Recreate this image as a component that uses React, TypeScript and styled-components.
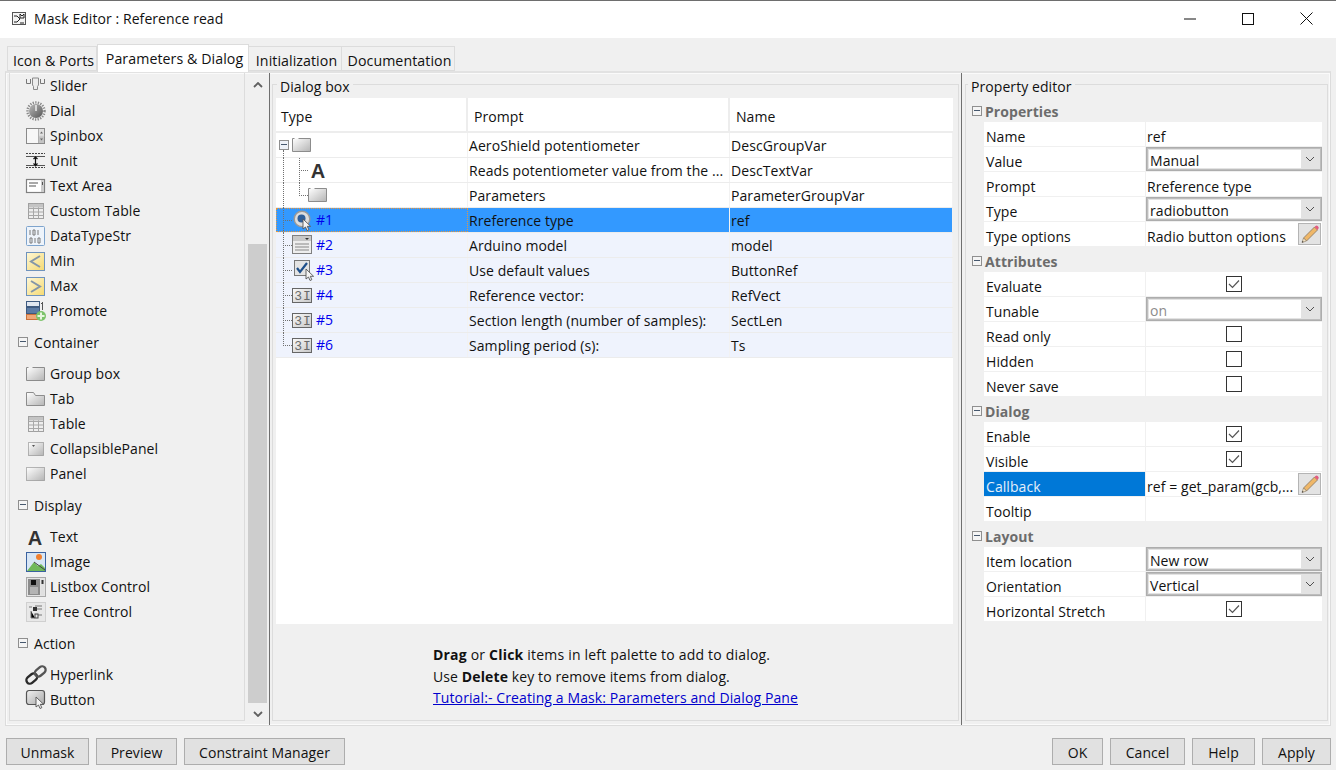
import React from 'react';
import styled, { createGlobalStyle } from 'styled-components';

const Global = createGlobalStyle`
  html, body { margin: 0; padding: 0; background: #f0f0f0; overflow: hidden; }
  * { box-sizing: border-box; }
`;

const Windowed = styled.div`
  width: 1336px; height: 770px; display: flex; flex-direction: column; overflow: hidden;
  background: #f0f0f0; color: #111;
  font-family: "Open Sans", "Noto Sans", sans-serif; font-size: 14px; letter-spacing: .07px;
`;
const TitleBar = styled.header`
  height: 38px; flex: none; background: #fff; border-top: 1px solid #6e6e6e;
  display: flex; align-items: center; padding-left: 12px; padding-bottom: 2px; padding-right: 1px;
`;
const TitleText = styled.span`margin-left: 8px; font-size: 14px; flex: 1; white-space: nowrap;`;
const WinButton = styled.span`width: 58px; height: 30px; display: flex; align-items: center; justify-content: center;`;
const Tabs = styled.nav`height: 33px; flex: none; display: flex; align-items: flex-end; padding-left: 8px; position: relative; z-index: 1;`;
const Tab = styled.div<{ $active?: boolean; $w: number }>`
  width: ${p => p.$w}px; height: ${p => (p.$active ? 28 : 25)}px; margin-bottom: ${p => (p.$active ? -1 : 0)}px;
  background: ${p => (p.$active ? '#fff' : '#f0f0f0')}; font-size: 14.2px;
  border: 1px solid #dcdcdc; border-bottom: ${p => (p.$active ? 'none' : '1px solid #dcdcdc')};
  margin-left: ${p => (p.$active ? 0 : -1)}px;
  display: flex; align-items: center; justify-content: center; white-space: nowrap;
  padding-left: 3px;
  padding-bottom: ${p => (p.$active ? 1 : 0)}px; padding-top: ${p => (p.$active ? 0 : 3)}px;
`;
const Pane = styled.main`
  margin: 0 5px; height: 655px; flex: none; border: 1px solid #dcdcdc; border-top: 2px solid #e2e2e2;
  box-shadow: inset 0 0 0 1px #fafafa;
  display: flex; padding: 0 0 4px 3px;
`;
const PaletteBox = styled.section`
  width: 236px; flex: none; border: 1px solid #dcdcdc; border-top: none; overflow: hidden;
`;
const PaletteRow = styled.div`height: 25px; display: flex; align-items: center; padding-left: 15px; gap: 3px; white-space: nowrap;`;
const IconSlot = styled.span`width: 22px; height: 22px; flex: none; display: flex; align-items: center; justify-content: center;`;
const CategoryRow = styled.div`height: 38px; display: flex; align-items: center; padding-left: 8px; gap: 6px;`;
const Collapse = styled.span`
  width: 10px; height: 10px; flex: none; border: 1px solid #8f8f8f; background: #f4f4f4; position: relative;
  &::after { content: ''; position: absolute; left: 1px; right: 1px; top: 3px; height: 1px; background: #46586e; }
`;
const Scrollbar = styled.div`
  width: 20px; flex: none; margin-left: 3px; margin-bottom: -4px; display: flex; flex-direction: column; align-items: center;
`;
const ScrollArrow = styled.span`height: 24px; flex: none; display: flex; align-items: center; justify-content: center;`;
const ScrollThumb = styled.div`width: 19px; align-self: flex-start; height: 459px; margin-top: 147px; margin-bottom: -1px; background: #cdcdcd; flex: none;`;
const Splitter = styled.div<{ $ml: number }>`width: 1px; flex: none; margin-left: ${p => p.$ml}px; margin-bottom: -4px; background: #6f6f6f;`;
const Group = styled.section<{ $w: number; $ml: number }>`
  width: ${p => p.$w}px; margin-left: ${p => p.$ml}px; margin-top: 11px; flex: none; position: relative;
  border: 1px solid #dcdcdc; padding-top: 13px;
`;
const Legend = styled.span<{ $x: number }>`
  position: absolute; left: ${p => p.$x}px; top: -8px; line-height: 20px; padding: 0 3px; background: #f0f0f0;
`;
const DialogInner = styled.div`margin-left: 3px; width: 677px;`;
const TreeTable = styled.div`height: 526px; background: #fff;`;
const Row = styled.div<{ $bg?: string }>`
  height: 25px; display: grid; grid-template-columns: 192px 262px 223px; background: ${p => p.$bg || '#fff'};
  border-bottom: 1px solid #ececec;
`;
const HeadRow = styled.div`
  height: 35px; display: grid; grid-template-columns: 192px 262px 223px; border-bottom: 2px solid #ededed;
`;
const HeadCell = styled.div`
  display: flex; align-items: center; padding-left: 6px; border-right: 2px solid #ededed; padding-top: 3px;
  &:first-child { padding-left: 5px; }
  &:last-child { border-right: none; }
`;
const TypeCell = styled.div<{ $sel?: boolean }>`
  position: relative; display: flex; align-items: center; color: #0000ee; font-size: 14px;
  border-right: 1px solid ${p => (p.$sel ? 'transparent' : '#f2f2f2')};
  outline: ${p => (p.$sel ? '1px dotted #e8963c' : 'none')}; outline-offset: -1px;
`;
const TextCell = styled.div`display: flex; align-items: center; padding-left: 1px; white-space: nowrap; overflow: hidden; border-right: 1px solid #f2f2f2;`;
const RowIcon = styled.span<{ $x: number }>`position: absolute; left: ${p => p.$x}px; top: 1px; width: 22px; height: 22px; display: flex; align-items: center; justify-content: center;`;
const RowNum = styled.span`position: absolute; left: 40px; top: 2px; line-height: 20px;`;
const VGuide = styled.i<{ $x: number; $top: number; $h: number }>`
  position: absolute; left: ${p => p.$x}px; top: ${p => p.$top}px; height: ${p => p.$h}px; border-left: 1px dotted #707070;
`;
const HGuide = styled.i<{ $x: number; $w: number }>`
  position: absolute; left: ${p => p.$x}px; top: 12px; width: ${p => p.$w}px; border-top: 1px dotted #707070;
`;
const RowToggle = styled(Collapse)`position: absolute; left: 3px; top: 7px; background: #eef2f8;`;
const Help = styled.div`margin: 20px 0 0 157px; line-height: 21.5px; white-space: nowrap; letter-spacing: .11px;`;
const HelpFirst = styled.div`letter-spacing: .2px;`;
const HelpLink = styled.span`color: #0000cc; text-decoration: underline;`;
const PropBox = styled.div`margin-left: 6px; margin-top: -1px; width: 350px;`;
const SectionHead = styled.div`height: 25px; display: flex; align-items: center; gap: 3px; font-weight: 700; color: #6c6c6c; padding-top: 3px;`;
const PropRow = styled.div`
  height: 25px; margin-left: 12px; display: grid; grid-template-columns: 161px 176px; gap: 1px; border-bottom: 1px solid #f0f0f0; background: #f0f0f0;
`;
const PropLabel = styled.div<{ $sel?: boolean }>`
  background: ${p => (p.$sel ? '#0078d7' : '#fff')}; color: ${p => (p.$sel ? '#e4effa' : '#111')}; display: flex; align-items: center; padding: 4px 0 0 2px; white-space: nowrap;
`;
const PropValue = styled.div<{ $center?: boolean }>`
  background: #fff; display: flex; align-items: center; white-space: nowrap; overflow: hidden;
  justify-content: ${p => (p.$center ? 'center' : 'flex-start')};
`;
const PropText = styled.span`padding: 4px 0 0 1px; flex: 1; overflow: hidden;`;
const Select = styled.div<{ $dim?: boolean }>`
  width: 176px; height: 24px; border: 1px solid #adadad; box-shadow: inset 0 0 0 1px #bdbdbd; display: flex; background: #e3e3e3; padding: 2px;
  color: ${p => (p.$dim ? '#8c8c8c' : '#111')};
`;
const SelectField = styled.span`flex: 1; background: #fff; padding: 0 0 0 1px;`;
const SelectValue = styled.span`display: block; line-height: 22px;`;
const SelectArrow = styled.span`width: 18px; display: flex; align-items: center; justify-content: center;`;
const Checkbox = styled.span`width: 16px; height: 16px; border: 1px solid #333; background: #fff; display: flex; align-items: center; justify-content: center;`;
const PencilButton = styled.span`
  width: 23px; height: 22px; flex: none; margin-right: 1px; background: #e3e3e3; border: 1px solid #b4b4b4; display: flex; align-items: center; justify-content: center;
`;
const Footer = styled.footer`flex: 1; display: flex; gap: 7px; padding: 12px 5px 5px 6px;`;
const FootButton = styled.div<{ $w: number; $push?: boolean }>`
  width: ${p => p.$w}px; height: 27px; background: #e1e1e1; border: 1px solid #adadad; display: flex; align-items: center; justify-content: center;
  padding-top: 1px; margin-left: ${p => (p.$push ? 'auto' : 0)};
`;

const Grad = ({ id, a = '#fff', b = '#b4b4b4' }: { id: string; a?: string; b?: string }) => (
  <defs><linearGradient id={id} x1="0" y1="0" x2="1" y2="1"><stop offset="0" stopColor={a} /><stop offset="1" stopColor={b} /></linearGradient></defs>
);
const Cursor = ({ x, y }: { x: number; y: number }) => (
  <path transform={`translate(${x} ${y})`} d="M0 0v10l2.500-2 1.500 3.500 1.800-.8-1.500-3.400h3.300z" fill="#f4f4f4" stroke="#555" strokeWidth=".9" />
);

const GroupGlyph = ({ id }: { id: string }) => (
  <g>
    <Grad id={id} />
    <rect x=".5" y="3.500" width="18" height="13" fill={`url(#${id})`} />
    <path d="M2.500 3.500H.5v13h18v-13H6.500" fill="none" stroke="#8c8c8c" />
  </g>
);

const glyphs: Record<string, React.ReactNode> = {
  slider: <g fill="none" stroke="#777"><path d="M.5 3v4.500h4V3M14.500 3v4.500h4V3" /><path d="M6.500 2h6v7l-1 1.500v3h-4v-3l-1-1.500z" fill="#ececec" stroke="#8a8a8a" /></g>,
  dial: <g><Grad id="d1" a="#bbb" b="#555" /><circle cx="10" cy="10" r="8.500" fill="none" stroke="#8a8a8a" strokeDasharray="1.300 1.300" strokeWidth="2.500" /><circle cx="10" cy="10" r="7" fill="url(#d1)" /><path d="M10 4v6" stroke="#eee" strokeWidth="1.500" /></g>,
  spin: <g><rect x=".5" y="2.500" width="18" height="15" fill="#f7f7f7" stroke="#8a8a8a" /><path d="M12.500 3v14M12.500 10h6" stroke="#b0b0b0" /><rect x="13" y="3" width="5" height="6.500" fill="#e0e0e0" /><rect x="13" y="10.500" width="5" height="6.500" fill="#c4c4c4" /><path d="M14 7.500l1.500-2 1.500 2zM14 12.500l1.500 2 1.500-2z" fill="#666" /></g>,
  unit: <g stroke="#444" fill="none"><path d="M0 2.500h19M0 16.500h19" strokeDasharray="2 1" /><path d="M0 5.500h19M0 14.500h19" stroke="#555" /><path d="M9.500 5.500v10M7.500 8l2-2 2 2M7.500 12.500l2 2 2-2" stroke="#111" strokeWidth="1.200" /></g>,
  textarea: <g><rect x=".5" y="3.500" width="18" height="13" fill="#fff" stroke="#808080" strokeWidth="1.200" /><path d="M3 7h9M3 10h7" stroke="#555" strokeWidth="1.200" /><rect x="15" y="4" width="3" height="12" fill="#ccc" /><rect x="16" y="6" width="1" height="3" fill="#555" /></g>,
  table: <g><rect x="2.500" y="2.500" width="15" height="15" fill="#eee" stroke="#a0a0a0" /><path d="M2.500 7.500h15M2.500 11h15M2.500 14.500h15M7.500 2.500v15M12.500 2.500v15" stroke="#a8a8a8" /><rect x="3" y="3" width="14" height="3.500" fill="#c4c4c4" /></g>,
  datatype: <g><rect x=".5" y=".5" width="18" height="19" rx="1" fill="#eef4fb" stroke="#7ea4cd" /><path d="M4 4v5M7 4h2v5H7zM12 4v5M4 12h2v5H4zM9 12v5M12 12h2v5h-2z" stroke="#7a7a7a" fill="none" /></g>,
  min: <g><Grad id="y1" a="#fff8d8" b="#f5d970" /><rect x=".5" y="1.500" width="18" height="18" fill="url(#y1)" stroke="#6f93bd" /><path d="M14 5l-9 5.500 9 5.500" fill="none" stroke="#8496a8" strokeWidth="2" /></g>,
  max: <g><Grad id="y2" a="#fff8d8" b="#f5d970" /><rect x=".5" y="1.500" width="18" height="18" fill="url(#y2)" stroke="#6f93bd" /><path d="M5 5l9 5.500-9 5.500" fill="none" stroke="#8496a8" strokeWidth="2" /></g>,
  promote: <g><rect x=".5" y=".5" width="13" height="5" fill="#dfe6f0" stroke="#3e5a80" /><rect x=".5" y="6.500" width="13" height="6" fill="#5b7ba5" stroke="#3e5a80" /><rect x=".5" y="13.500" width="13" height="5" fill="#f0a878" stroke="#c8703a" /><path d="M16.500 1v8M15 2.500h2" stroke="#555" fill="none" /><circle cx="15" cy="15" r="5" fill="#7cc36a" /><path d="M15 11.500v7M11.500 15h7" stroke="#e8f6e0" strokeWidth="2" /></g>,
  groupbox: <GroupGlyph id="g1" />,
  tab: <g><Grad id="g2" /><path d="M.5 16.500v-13h7l2 3h9v10z" fill="url(#g2)" stroke="#8c8c8c" /></g>,
  collapsible: <g><Grad id="g3" /><rect x="2.500" y="3.500" width="15" height="13" fill="url(#g3)" stroke="#777" strokeDasharray="1 1" /><path d="M6 6h3l-1.500 2z" fill="#555" /></g>,
  panel: <g><Grad id="g4" /><rect x=".5" y="3.500" width="18" height="13" fill="url(#g4)" stroke="#777" strokeDasharray="1 1" /></g>,
  image: <g><rect x=".5" y=".5" width="19" height="19" fill="#d8e6f5" stroke="#3a62a0" /><circle cx="13" cy="5" r="3" fill="#f08030" /><path d="M1 19l7-9 4 4 3-2 4 4v3z" fill="#6fb85a" /><path d="M8 10l11 8" stroke="#444" /></g>,
  listbox: <g><rect x=".5" y=".5" width="19" height="19" fill="#e4e4e4" stroke="#a8a8a8" /><rect x="2" y="2" width="12" height="16" fill="#8c8c8c" /><rect x="15" y="2" width="3" height="16" fill="#e0e0e0" /><rect x="15.500" y="3" width="2" height="4" fill="#333" /><rect x="5" y="3" width="5" height="5" fill="#111" /><rect x="4" y="10" width="8" height="7" fill="#b4b4b4" /></g>,
  tree: <g><rect x=".5" y=".5" width="19" height="19" fill="#e8e8e8" stroke="#d0d0d0" /><path d="M3 5h3M9 4h7M9 7h7M5 9v7h4M12 13h4" stroke="#777" /><rect x="7" y="5" width="4" height="4" fill="#333" /><rect x="9" y="12" width="3" height="4" fill="none" stroke="#444" /></g>,
  link: <g transform="rotate(-40 10 10)" fill="none" stroke="#2a2a2a" strokeWidth="2.300"><rect x="-1.500" y="6.500" width="12" height="7" rx="3.500" /><rect x="9.500" y="6.500" width="12" height="7" rx="3.500" stroke="#555" /></g>,
  button: <g><Grad id="b1" a="#f0f0f0" b="#aaa" /><rect x=".5" y=".5" width="18" height="14" rx="2.500" fill="url(#b1)" stroke="#555" strokeWidth="1.200" /><Cursor x={10} y={7} /></g>,
  radio: <g><circle cx="9" cy="9" r="7.800" fill="#ddd" stroke="#999" strokeWidth="1.400" /><circle cx="8.500" cy="8.500" r="4" fill="#2f5f9a" /><Cursor x={10} y={9} /></g>,
  popup: <g><rect x=".5" y=".5" width="19" height="18" fill="#eee" stroke="#808080" /><rect x="1" y="1" width="18" height="5" fill="#c8c8c8" /><path d="M13 3h4l-2 2z" fill="#333" /><path d="M3 9h14M3 12h14M3 15h14" stroke="#888" /></g>,
  check: <g><rect x=".5" y=".5" width="15" height="15" fill="#e4e4e4" stroke="#777" /><path d="M3 8l3 4 7-9" fill="none" stroke="#1e4f8a" strokeWidth="2.200" /><Cursor x={12} y={9} /></g>,
  edit: <g><Grad id="e1" a="#fafafa" b="#c8c8c8" /><rect x=".5" y="3.500" width="19" height="14" fill="url(#e1)" stroke="#666" /><text x="2.200" y="15" fontFamily="Liberation Mono, monospace" fontSize="13" letterSpacing="1" fill="#6a6a6a">3I</text></g>,
  letterA: <text x="9" y="17.500" textAnchor="middle" fontFamily="Liberation Sans, sans-serif" fontWeight="700" fontSize="20" fill="#333">A</text>,
};

const Icon = ({ name, size = 20 }: { name: string; size?: number }) => (
  <svg width={size} height={size} viewBox="0 0 20 20" overflow="visible">{glyphs[name]}</svg>
);

const Chevron = () => (
  <svg width="10" height="6" viewBox="0 0 10 6"><path d="M1 1l4 4 4-4" fill="none" stroke="#505050" /></svg>
);
const ScrollChevron = ({ up }: { up?: boolean }) => (
  <svg width="10" height="6" viewBox="0 0 10 6"><path d={up ? 'M1 5l4-4 4 4' : 'M1 1l4 4 4-4'} fill="none" stroke="#606060" strokeWidth="1.800" /></svg>
);
const Tick = () => (
  <svg width="12" height="10" viewBox="0 0 12 10"><path d="M1 5l3.500 3.500L11 1.500" fill="none" stroke="#555" strokeWidth="1.200" /></svg>
);
const Pencil = () => (
  <svg width="20" height="20" viewBox="0 0 20 20">
    <path d="M3.500 14L14.500 3l3 3L6.500 17z" fill="#efb768" stroke="#857560" strokeWidth=".8" />
    <path d="M14.500 3l1-1c.8-.8 1.500-.8 2.200 0l.6.7c.6.700.6 1.300 0 2L17.500 6z" fill="#e25c80" />
    <path d="M3.500 14l3 3-4.500 1.500z" fill="#f3e2c4" stroke="#857560" strokeWidth=".6" />
    <path d="M2 18.500l.5-1.600 1.100 1.100z" fill="#222" />
  </svg>
);

const palette1 = [['slider', 'Slider'], ['dial', 'Dial'], ['spin', 'Spinbox'], ['unit', 'Unit'], ['textarea', 'Text Area'], ['table', 'Custom Table'], ['datatype', 'DataTypeStr'], ['min', 'Min'], ['max', 'Max'], ['promote', 'Promote']];
const paletteGroups = [
  { title: 'Container', items: [['groupbox', 'Group box'], ['tab', 'Tab'], ['table', 'Table'], ['collapsible', 'CollapsiblePanel'], ['panel', 'Panel']] },
  { title: 'Display', items: [['letterA', 'Text'], ['image', 'Image'], ['listbox', 'Listbox Control'], ['tree', 'Tree Control']] },
  { title: 'Action', items: [['link', 'Hyperlink'], ['button', 'Button']] },
];

const PaletteItem = ({ icon, label }: { icon: string; label: string }) => (
  <PaletteRow><IconSlot><Icon name={icon} /></IconSlot><span>{label}</span></PaletteRow>
);

const treeRows = [
  { num: '', icon: 'groupbox', x: 15, p: 'AeroShield potentiometer', n: 'DescGroupVar', root: true },
  { num: '', icon: 'letterA', x: 32, p: 'Reads potentiometer value from the ...', n: 'DescTextVar', child: true },
  { num: '', icon: 'groupbox', x: 31, p: 'Parameters', n: 'ParameterGroupVar', child: true, lastChild: true },
  { num: '#1', icon: 'radio', x: 16, p: 'Rreference type', n: 'ref', sel: true },
  { num: '#2', icon: 'popup', x: 15, p: 'Arduino model', n: 'model' },
  { num: '#3', icon: 'check', x: 17, p: 'Use default values', n: 'ButtonRef' },
  { num: '#4', icon: 'edit', x: 15, p: 'Reference vector:', n: 'RefVect' },
  { num: '#5', icon: 'edit', x: 15, p: 'Section length (number of samples):', n: 'SectLen' },
  { num: '#6', icon: 'edit', x: 15, p: 'Sampling period (s):', n: 'Ts', last: true },
];

type Prop = { label: string; kind: 'text' | 'select' | 'dim' | 'check' | 'empty' | 'pencil'; value?: string; sel?: boolean };
const propSections: { title: string; rows: Prop[] }[] = [
  { title: 'Properties', rows: [
    { label: 'Name', kind: 'text', value: 'ref' },
    { label: 'Value', kind: 'select', value: 'Manual' },
    { label: 'Prompt', kind: 'text', value: 'Rreference type' },
    { label: 'Type', kind: 'select', value: 'radiobutton' },
    { label: 'Type options', kind: 'pencil', value: 'Radio button options' },
  ] },
  { title: 'Attributes', rows: [
    { label: 'Evaluate', kind: 'check' },
    { label: 'Tunable', kind: 'dim', value: 'on' },
    { label: 'Read only', kind: 'empty' },
    { label: 'Hidden', kind: 'empty' },
    { label: 'Never save', kind: 'empty' },
  ] },
  { title: 'Dialog', rows: [
    { label: 'Enable', kind: 'check' },
    { label: 'Visible', kind: 'check' },
    { label: 'Callback', kind: 'pencil', value: 'ref = get_param(gcb,...', sel: true },
    { label: 'Tooltip', kind: 'text', value: '' },
  ] },
  { title: 'Layout', rows: [
    { label: 'Item location', kind: 'select', value: 'New row' },
    { label: 'Orientation', kind: 'select', value: 'Vertical' },
    { label: 'Horizontal Stretch', kind: 'check' },
  ] },
];

const PropCell = ({ row }: { row: Prop }) => {
  if (row.kind === 'select' || row.kind === 'dim') {
    return (
      <PropValue>
        <Select $dim={row.kind === 'dim'}><SelectField><SelectValue>{row.value}</SelectValue></SelectField><SelectArrow><Chevron /></SelectArrow></Select>
      </PropValue>
    );
  }
  if (row.kind === 'check' || row.kind === 'empty') {
    return <PropValue $center><Checkbox>{row.kind === 'check' && <Tick />}</Checkbox></PropValue>;
  }
  if (row.kind === 'pencil') {
    return <PropValue><PropText>{row.value}</PropText><PencilButton><Pencil /></PencilButton></PropValue>;
  }
  return <PropValue><PropText>{row.value}</PropText></PropValue>;
};

export default function App() {
  return (
    <Windowed>
      <Global />
      <TitleBar>
        <svg width="14" height="14" viewBox="0 0 14 14">
          <rect x=".5" y=".5" width="13" height="12" fill="#f4f4f4" stroke="#555" />
          <path d="M2 4h3l3 3-3 3H2M8 2v4h4V2L10 4zM8 11h4" fill="none" stroke="#222" />
        </svg>
        <TitleText>Mask Editor : Reference read</TitleText>
        <WinButton><svg width="12" height="2" viewBox="0 0 12 2"><path d="M0 1h12" stroke="#111" /></svg></WinButton>
        <WinButton><svg width="12" height="12" viewBox="0 0 12 12"><rect x=".5" y=".5" width="11" height="11" fill="none" stroke="#111" /></svg></WinButton>
        <WinButton><svg width="13" height="13" viewBox="0 0 13 13"><path d="M.5.500l12 12M12.500.500l-12 12" stroke="#111" /></svg></WinButton>
      </TitleBar>
      <Tabs>
        <Tab $w={90}>Icon &amp; Ports</Tab>
        <Tab $active $w={152}>Parameters &amp; Dialog</Tab>
        <Tab $w={94}>Initialization</Tab>
        <Tab $w={114}>Documentation</Tab>
      </Tabs>
      <Pane>
        <PaletteBox>
          {palette1.map(([i, l]) => <PaletteItem key={l} icon={i} label={l} />)}
          {paletteGroups.map(g => (
            <div key={g.title}>
              <CategoryRow><Collapse /><span>{g.title}</span></CategoryRow>
              {g.items.map(([i, l]) => <PaletteItem key={l} icon={i} label={l} />)}
            </div>
          ))}
        </PaletteBox>
        <Scrollbar>
          <ScrollArrow><ScrollChevron up /></ScrollArrow>
          <ScrollThumb />
          <ScrollArrow><ScrollChevron /></ScrollArrow>
        </Scrollbar>
        <Splitter $ml={1} />
        <Group $w={687} $ml={2}>
          <Legend $x={4}>Dialog box</Legend>
          <DialogInner>
            <TreeTable>
              <HeadRow>
                <HeadCell>Type</HeadCell>
                <HeadCell>Prompt</HeadCell>
                <HeadCell>Name</HeadCell>
              </HeadRow>
              {treeRows.map((r, idx) => (
                <Row key={idx} $bg={r.sel ? '#3399ff' : r.num ? '#eff3fd' : '#fff'}>
                  <TypeCell $sel={r.sel}>
                    <VGuide $x={7} $top={r.root ? 17 : 0} $h={r.last ? 13 : r.root ? 8 : 25} />
                    {r.child && <VGuide $x={23} $top={0} $h={r.lastChild ? 13 : 25} />}
                    {r.child ? <HGuide $x={23} $w={9} /> : !r.root && <HGuide $x={7} $w={9} />}
                    {r.root && <RowToggle />}
                    <RowIcon $x={r.x}><Icon name={r.icon} /></RowIcon>
                    {r.num && <RowNum>{r.num}</RowNum>}
                  </TypeCell>
                  <TextCell>{r.p}</TextCell>
                  <TextCell>{r.n}</TextCell>
                </Row>
              ))}
            </TreeTable>
            <Help>
              <HelpFirst><b>Drag</b> or <b>Click</b> items in left palette to add to dialog.</HelpFirst>
              <div>Use <b>Delete</b> key to remove items from dialog.</div>
              <HelpLink>Tutorial:- Creating a Mask: Parameters and Dialog Pane</HelpLink>
            </Help>
          </DialogInner>
        </Group>
        <Splitter $ml={2} />
        <Group $w={363} $ml={3}>
          <Legend $x={2}>Property editor</Legend>
          <PropBox>
            {propSections.map(s => (
              <div key={s.title}>
                <SectionHead><Collapse /><span>{s.title}</span></SectionHead>
                {s.rows.map(r => (
                  <PropRow key={r.label}>
                    <PropLabel $sel={r.sel}>{r.label}</PropLabel>
                    <PropCell row={r} />
                  </PropRow>
                ))}
              </div>
            ))}
          </PropBox>
        </Group>
      </Pane>
      <Footer>
        <FootButton $w={83}>Unmask</FootButton>
        <FootButton $w={81}>Preview</FootButton>
        <FootButton $w={161}>Constraint Manager</FootButton>
        <FootButton $w={51} $push>OK</FootButton>
        <FootButton $w={75}>Cancel</FootButton>
        <FootButton $w={63}>Help</FootButton>
        <FootButton $w={69}>Apply</FootButton>
      </Footer>
    </Windowed>
  );
}
